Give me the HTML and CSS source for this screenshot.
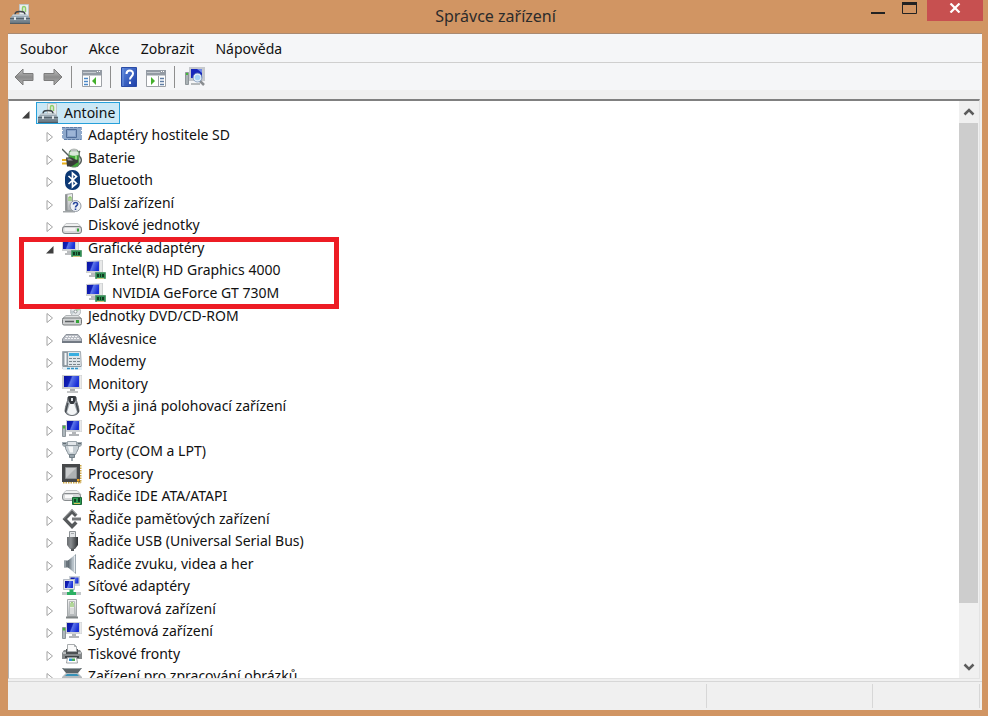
FILE: index.html
```
<!DOCTYPE html>
<html lang="cs">
<head>
  <meta charset="UTF-8">
  <title>Správce zařízení</title>
  <link rel="stylesheet" href="styles.css">
</head>
<body>

  <!-- icon set -->
  <svg class="defs" aria-hidden="true">
    <defs>
      <linearGradient id="gScreen" x1="0" y1="0" x2="1" y2=".3">
        <stop offset="0" stop-color="#0a12a0"/><stop offset=".45" stop-color="#1020b8"/><stop offset=".55" stop-color="#5a74e8"/><stop offset="1" stop-color="#1a30d8"/>
      </linearGradient>
      <linearGradient id="gMetal" x1="0" y1="0" x2="0" y2="1">
        <stop offset="0" stop-color="#f4f4f4"/><stop offset="1" stop-color="#b0b4b6"/>
      </linearGradient>
      <linearGradient id="gSide" x1="0" y1="0" x2="1" y2="0">
        <stop offset="0" stop-color="#6c747b"/><stop offset=".5" stop-color="#e9edf0"/><stop offset="1" stop-color="#59616a"/>
      </linearGradient>
      <linearGradient id="gDark" x1="0" y1="0" x2="1" y2="0">
        <stop offset="0" stop-color="#6a6d70"/><stop offset=".35" stop-color="#8a8e91"/><stop offset="1" stop-color="#2e3133"/>
      </linearGradient>
      <linearGradient id="gCone" x1="0" y1="0" x2="1" y2="0">
        <stop offset="0" stop-color="#59646c"/><stop offset=".6" stop-color="#b8c3cb"/><stop offset="1" stop-color="#7d8b95"/>
      </linearGradient>
      <linearGradient id="gCase" x1="0" y1="0" x2="0" y2="1">
        <stop offset="0" stop-color="#a9b8c2"/><stop offset="1" stop-color="#5f6d77"/>
      </linearGradient>
      <linearGradient id="gArrow" x1="0" y1="0" x2="0" y2="1">
        <stop offset="0" stop-color="#c4c4c4"/><stop offset=".5" stop-color="#8c8c8c"/><stop offset="1" stop-color="#b0b0b0"/>
      </linearGradient>
      <linearGradient id="gHelp" x1="0" y1="0" x2="1" y2="1">
        <stop offset="0" stop-color="#5b86dc"/><stop offset="1" stop-color="#1d3fa8"/>
      </linearGradient>
    </defs>

    <symbol id="i-root" viewBox="0 0 20 20">
      <path d="M9.500.5h9v12h-9z" fill="#e9eded" stroke="#c0c6c7"/>
      <path d="M12.500 8V4a1.500 1.500 0 0 1 3 0v4" fill="none" stroke="#8fcf6a" stroke-width="1.500"/>
      <path d="M5 11c0-3.500 2-3.500 5-3.500s5 0 5 3.500" fill="none" stroke="#3f464b" stroke-width="1.600"/>
      <path d="M3 10.500h14l3 3.500v6H0v-6z" fill="url(#gCase)"/>
      <path d="M3 10.500h14l1 1.500H2z" fill="#c1ccd3"/>
      <path d="M0 14.500h20" stroke="#54626c"/><path d="M0 19.500h20" stroke="#4f5c65"/>
      <path d="M4 13h2v3H4zM14 13h2v3h-2z" fill="#dde3e6"/>
    </symbol>
    <symbol id="i-sd" viewBox="0 0 20 20">
      <path d="M0 2h20v3h-1v1h1v3h-1v1h1v5H3l-3-2v-3h1V9H0V6h1V5H0z" fill="#8fa9cb"/>
      <path d="M0 2.500h20M2 14.500h17" stroke="#5f7da8" stroke-dasharray="3 1"/>
      <path d="M4.500 4.500h10v8h-10z" fill="#86a1c8" stroke="#4f6c98"/>
      <path d="M6 6h7v5H6z" fill="#9db5d6"/>
    </symbol>
    <symbol id="i-battery" viewBox="0 0 20 20">
      <path d="M0 1l8 8" stroke="#55605c" stroke-width="1.500"/>
      <path d="M15 17c5-1 5-6 3-8s-1-5 0-6" fill="none" stroke="#565f5c" stroke-width="1.500"/>
      <rect x="7" y="2" width="10" height="17" rx="3.500" fill="#3fa637" stroke="#66806a"/>
      <path d="M7.500 7V5c0-3 9-3 9 0v2c-2 1-7 1-9 0z" fill="#dbe8da"/>
      <ellipse cx="12" cy="2" rx="3.500" ry="1.500" fill="#b7bdba"/>
      <path d="M13 8h2v7h-2z" fill="#8ed77c"/>
      <path d="M0 12h5M0 15.500h5" stroke="#e9b01c" stroke-width="2"/>
      <path d="M4 9.500h4c4 0 4 3 8 2v3c-3 1-5 4-8 4H5z" fill="#3a3b3a"/>
      <path d="M5 10.500h3l3 2H6z" fill="#979a98"/>
    </symbol>
    <symbol id="i-bluetooth" viewBox="0 0 20 20">
      <rect x="3" y="0" width="15" height="20" rx="7" fill="#0c3874"/>
      <path d="M6.500 6l8 7.500-4 3.500V3l4 3.500-8 7.500" fill="none" stroke="#fff" stroke-width="1.700"/>
    </symbol>
    <symbol id="i-other" viewBox="0 0 20 20">
      <path d="M3.500 1.500l7-1v17h-7z" fill="url(#gMetal)" stroke="#9ba0a1"/>
      <path d="M3.500 1.500v16h2v-16z" fill="#8e9294"/><path d="M1 18h12v1.500H1z" fill="#a0a5a7"/>
      <path d="M7 8V4h2v4" fill="none" stroke="#79bf4c"/>
      <circle cx="13.500" cy="13" r="5.500" fill="#eef1f6" stroke="#939aa3"/>
      <path d="M11.500 11.500c0-3 4.500-2.500 4 0-.3 1.200-2 1.200-2 3M13.500 15.500v1.500" fill="none" stroke="#26459c" stroke-width="1.600"/>
    </symbol>
    <symbol id="i-disk" viewBox="0 0 20 20">
      <path d="M4 8.500h12l3.500 4H.5z" fill="#eff0f0" stroke="#c3c5c7"/>
      <rect x=".5" y="11.500" width="19" height="7" rx="2.500" fill="#d6d8d9" stroke="#7e8284"/>
      <path d="M2.500 13h11v3h-11z" fill="#f4f4f4"/>
      <path d="M15 13.500h2v3h-2z" fill="#35a438"/>
    </symbol>
    <symbol id="i-display" viewBox="0 0 20 20">
      <path d="M0 1l17-1v13H0z" fill="#cfd1d2"/>
      <path d="M14 1l2-.5V13h-2z" fill="#e8e9e9"/>
      <path d="M1 2l12-.5V11H1z" fill="url(#gScreen)"/>
      <path d="M5 13h5v2H5zM3 15h7v2H3z" fill="#b9bcbe"/>
      <path d="M9.500 12.500h10v6h-10z" fill="#2e8f54" stroke="#5d9e74"/>
      <path d="M11 14h2v3h-2zM14 14h1v3h-1zM16 14h2v3h-2z" fill="#123b21"/>
      <path d="M11 18.500h7" stroke="#d3c67e"/>
    </symbol>
    <symbol id="i-dvd" viewBox="0 0 20 20">
      <circle cx="13.500" cy="5.500" r="5" fill="#e3e7e9" stroke="#b3b8bb"/>
      <path d="M13.500 5.500l1.500-5a5 5 0 0 1 3.500 3z" fill="#a5d7a1"/>
      <path d="M13.500 5.500l-4 3-1-4z" fill="#c2cbd0"/>
      <circle cx="13.500" cy="5.500" r="1.500" fill="#fff" stroke="#8f9699"/>
      <path d="M4 9.500h12l3.500 3H.5z" fill="#dfe1e2" stroke="#b0b4b6"/>
      <rect x=".5" y="12" width="19" height="7" rx="1.500" fill="#cfd1d2" stroke="#74787a"/>
      <path d="M3 15.500h9" stroke="#5d6163" stroke-width="1.500"/>
      <path d="M14 14h3v3h-3z" fill="#35a438"/>
    </symbol>
    <symbol id="i-keyboard" viewBox="0 0 20 20">
      <path d="M4 5.500h12l3.500 4.500v3.500H.5V10z" fill="#b9bdc4" stroke="#8d939b"/>
      <path d="M4 7.500h12M3 9.500h14" stroke="#f4f5f7" stroke-dasharray="2 1"/>
      <path d="M0 12h20v2H0z" fill="#737a84"/>
    </symbol>
    <symbol id="i-modem" viewBox="0 0 20 20">
      <path d="M.5.500h18l1 17H.5z" fill="#dfe5e9" stroke="#a2abb1"/>
      <path d="M1 1h5v14H1z" fill="#8f9aa2"/><path d="M3.500 2v12" stroke="#f3f6f8" stroke-width="2"/>
      <path d="M7 2h10v3H7z" fill="#38aee0"/>
      <path d="M7 7.500h11M7 10.500h11M7 13.500h11" stroke="#7b868d" stroke-dasharray="3 1"/>
      <path d="M0 15.500h20V19H1z" fill="#e3eef4"/><path d="M1 15.500h18" stroke="#8c979e"/><path d="M5 17.500h11" stroke="#2f94c8" stroke-width="1.500" stroke-dasharray="3 1"/>
    </symbol>
    <symbol id="i-monitor" viewBox="0 0 20 20">
      <path d="M0 1h20v14H0z" fill="#cccecf"/><path d="M18 1.500h1.500v13H18z" fill="#ececec"/>
      <path d="M2 2h15v11H2z" fill="url(#gScreen)"/>
      <path d="M8 15h5v2H8z" fill="#a9adae"/><path d="M5 17h11v2H5z" fill="#c3c5c6"/>
    </symbol>
    <symbol id="i-mouse" viewBox="0 0 20 20">
      <path d="M6 1c2-1.500 6-1.500 8 0 0 5 3 9 3 14-.5 6-13.500 6-14 0C3 10 6 6 6 1z" fill="url(#gSide)" stroke="#686d72"/>
      <path d="M6 1c2-1.500 6-1.500 8 0l-.5 4-2 3h-3l-2-3z" fill="#34383d"/><path d="M9 2h2v3H9z" fill="#dfe3e7"/>
      <path d="M8 8h4l3 8c-3 3.500-7 3.500-10 0z" fill="#f3f5f6"/>
      <path d="M6 7l-2.500 9M14 7l2.500 9" stroke="#43484d" stroke-width="1.300"/>
    </symbol>
    <symbol id="i-computer" viewBox="0 0 20 20">
      <path d="M4 1h16v12H4z" fill="#cfd2d5"/><path d="M18 1.500h1.500v11H18z" fill="#e9eaeb"/>
      <path d="M5 2h12v9H5z" fill="url(#gScreen)"/>
      <path d="M10 13h4v2h-4zM7 15h10v2H7z" fill="#b2b5b8"/>
      <path d="M.5 6.500h3v11h-3z" fill="#aeb7bc" stroke="#8d959a"/><path d="M1 7h2v2.500H1z" fill="#45b83b"/>
    </symbol>
    <symbol id="i-port" viewBox="0 0 20 20">
      <path d="M0 1h5v5H2L0 4zM15 1h5v3l-2 2h-3z" fill="#a2acb2"/>
      <path d="M1 2.500h3M16 2.500h3" stroke="#626d74"/>
      <path d="M5.500.5h9v4h-9z" fill="#e2e6e9" stroke="#9aa4aa"/>
      <path d="M3.500 4.500h13v3l-2 4-1 2h-7l-1-2-2-4z" fill="#c8d0d5" stroke="#8a949b"/>
      <path d="M6 5.500h5v6H8z" fill="#f6f8f9"/>
      <path d="M7.500 13.500h5v3h-5z" fill="#97a3ab" stroke="#737f87"/><path d="M9 17h2v3H9z" fill="#a5afb6"/>
    </symbol>
    <symbol id="i-cpu" viewBox="0 0 20 20">
      <path d="M18.500 1v18M1 18.500h18" stroke="#cba545" stroke-width="2" stroke-dasharray="1.500 1"/>
      <path d="M0 0h18v18H0z" fill="#46484a"/>
      <path d="M3.500 3.500h11v11h-11z" fill="#aeb1b3" stroke="#8c9092"/><path d="M4 4h10L4 14z" fill="#c9cbcc"/>
      <path d="M15 15h2.500v2.500H15z" fill="#f0a41c"/>
    </symbol>
    <symbol id="i-ide" viewBox="0 0 20 20">
      <path d="M4 4.500h11l4 4H.5z" fill="#eff0f0" stroke="#c3c5c7"/>
      <rect x=".5" y="7.500" width="18" height="7" rx="2.500" fill="#d6d8d9" stroke="#888c8e"/><path d="M3 9h8v3H3z" fill="#fafafa"/>
      <path d="M10.500 11.500h9v7h-9z" fill="#2d9a52" stroke="#1d6637"/>
      <path d="M12 13h2v3h-2zM16 12v4h2v-4z" fill="#124125"/><path d="M12 17.500h6" stroke="#d8c45c"/>
    </symbol>
    <symbol id="i-storage" viewBox="0 0 20 20">
      <path d="M10 0l5.500 5.500-2.500 2.500-3-3-5 5 5 5 3-3 2.500 2.500L10 20 .5 10z" fill="#56595b"/>
      <path d="M10 1l4.500 4.500M1.500 10L10 1" fill="none" stroke="#909395"/>
      <path d="M10 8.500h9v3h-9z" fill="#77797b"/>
    </symbol>
    <symbol id="i-usb" viewBox="0 0 20 20">
      <path d="M7.500.5h6v6h-6z" fill="#e3e6e8" stroke="#8d9295"/><path d="M9 2.500h3" stroke="#a7abad"/>
      <path d="M5 6h11v8l-3 4H8l-3-4z" fill="url(#gDark)"/><path d="M9 17.500h3V20H9z" fill="#54585b"/>
    </symbol>
    <symbol id="i-sound" viewBox="0 0 20 20">
      <path d="M2 6.500h5v7H2z" fill="#69747c"/><path d="M3 7v6" stroke="#c3ccd1"/>
      <path d="M6 6.500l8-6.500v20L6 13.500z" fill="url(#gCone)"/><path d="M12.500 1.500v17" stroke="#e4eaee" stroke-width="1.500"/>
    </symbol>
    <symbol id="i-network" viewBox="0 0 20 20">
      <path d="M7 0h11v10H7z" fill="#cdd2d8"/><path d="M8.500 1.500h8v6h-8z" fill="url(#gScreen)"/>
      <path d="M1 3h12v11H1z" fill="#dfe2e7"/><path d="M1.500 3.500h11v10h-11z" fill="none" stroke="#b6bcc5"/><path d="M3 5h8v7H3z" fill="url(#gScreen)"/>
      <path d="M0 16h19v3H0z" fill="#c3c8ca"/><path d="M7.500 13.500h4V16H14v3H5v-3h2.500z" fill="#2bb062"/>
    </symbol>
    <symbol id="i-software" viewBox="0 0 20 20">
      <path d="M5.500.500h9v17h-9z" fill="url(#gMetal)" stroke="#a5a9ab"/><path d="M7.500 2.500h5v13h-5z" fill="#ecedec" stroke="#b7bbbc"/>
      <path d="M9 8V4.500a1 1 0 0 1 2 0V8" fill="none" stroke="#79c048"/><path d="M9 9v6M11 9v6" stroke="#c6c9ca"/><path d="M4 17.500h12v2H4z" fill="#7f8485"/>
    </symbol>
    <symbol id="i-printer" viewBox="0 0 20 20">
      <path d="M2 6h16l2 3v6H0V9z" fill="#85898b"/><path d="M1 8h18v2H1z" fill="#b9bdbf"/><path d="M4 5h12v5H4z" fill="#4c5053"/>
      <path d="M5.500.5h7l2 2v5h-9z" fill="#fafafa" stroke="#a8acae"/><path d="M12.500.5v2h2" fill="none" stroke="#a8acae"/>
      <path d="M3 12h14v2H3z" fill="#3f4346"/>
      <path d="M5.500 13.500h9l1 5.500h-11z" fill="#fff" stroke="#9da1a3"/><path d="M7 14.500h3V17H7z" fill="#2e8fd0"/><path d="M10 14.500h3V17h-3z" fill="#4aab57"/>
    </symbol>
    <symbol id="i-scanner" viewBox="0 0 20 20">
      <path d="M0 2h20l-4 5H4z" fill="#5c6467"/><path d="M1 2h18l-1 1H2z" fill="#9ca4a7"/>
      <path d="M4 7h12l4 4v5H0v-5z" fill="#b5babd"/><path d="M5 8h10l2 2H3z" fill="#3692b8"/><path d="M0 12h20v2H0z" fill="#777d80"/>
    </symbol>

    <symbol id="t-back" viewBox="0 0 20 18">
      <path d="M1 9l8-8v4.500h10v7H9V17z" fill="url(#gArrow)" stroke="#7c7c7c"/>
    </symbol>
    <symbol id="t-forward" viewBox="0 0 20 18">
      <path d="M19 9l-8-8v4.500H1v7h10V17z" fill="url(#gArrow)" stroke="#7c7c7c"/>
    </symbol>
    <symbol id="t-tree" viewBox="0 0 20 18">
      <path d="M.5 1.500h19v16H.5z" fill="#fff" stroke="#9da1a6"/><path d="M0 1h20v5H0z" fill="#949ba4"/><path d="M1 3.500h13" stroke="#c4c9cf"/><path d="M15 2.500h4" stroke="#fff" stroke-dasharray="1 1"/>
      <path d="M1 6.500h18" stroke="#c9cdd1"/><path d="M7.500 7v10" stroke="#9ba0a6"/><path d="M2 9.500h4M2 12.500h4M2 15.500h4" stroke="#4b88c8" stroke-width="1.300"/>
      <path d="M14 8v8l-4-4z" fill="#44b02c"/>
    </symbol>
    <symbol id="t-pane" viewBox="0 0 20 18">
      <path d="M.5 1.500h19v16H.5z" fill="#fff" stroke="#9da1a6"/><path d="M0 1h20v5H0z" fill="#949ba4"/><path d="M1 3.500h13" stroke="#c4c9cf"/><path d="M15 2.500h4" stroke="#fff" stroke-dasharray="1 1"/>
      <path d="M1 6.500h18" stroke="#c9cdd1"/><path d="M12.500 7v10" stroke="#9ba0a6"/><path d="M14 9.500h4M14 12.500h4M14 15.500h4" stroke="#5f7da4" stroke-width="1.300"/>
      <path d="M5 8v8l4-4z" fill="#44b02c"/>
    </symbol>
    <symbol id="t-help" viewBox="0 0 16 20">
      <path d="M.5.5h15v19H.5z" fill="url(#gHelp)" stroke="#2a4ba6"/><path d="M2 1v18" stroke="#6f94dd"/>
      <path d="M5.500 7c0-4.500 6.500-4.500 6.500-.5 0 3-3 3-3 6" fill="none" stroke="#fff" stroke-width="2"/><path d="M8 14.500h2V17H8z" fill="#fff"/>
    </symbol>
    <symbol id="t-scan" viewBox="0 0 20 20">
      <path d="M4 0h16v14H4z" fill="#c6c9cd"/><path d="M6 2h11v9H6z" fill="#1626bb"/><path d="M12 2h5v4z" fill="#6d86e8"/>
      <path d="M6 16h9v2H6z" fill="#b6babc"/><path d="M.5 5.500h3v12h-3z" fill="#aab2b6" stroke="#8f969a"/><path d="M1 6h2v2H1z" fill="#45b83b"/>
      <path d="M15 14l4 4" stroke="#8a8e91" stroke-width="2.500"/><circle cx="12.500" cy="10.500" r="3.500" fill="#a5d2f5" stroke="#e3eef7" stroke-width="1.500"/><circle cx="12.500" cy="10.500" r="4.500" fill="none" stroke="#6c8bb4" stroke-width=".7"/>
    </symbol>

    <symbol id="a-closed" viewBox="0 0 8 12"><path d="M1 1.500v9L6.500 6z" fill="#fff" stroke="#a3a3a3"/></symbol>
    <symbol id="a-open" viewBox="0 0 8 12"><path d="M7.500 2v7.500H0z" fill="#3f3f3f"/></symbol>
  </svg>

  <div class="window">
    <header class="titlebar">
      <svg class="app-icon"><use href="#i-root"/></svg>
      <h1 class="title">Správce zařízení</h1>
      <div class="controls">
        <button class="ctl" aria-label="Minimalizovat"><svg width="16" height="14"><path d="M1 12h14v2H1z" fill="#222"/></svg></button>
        <button class="ctl" aria-label="Maximalizovat"><svg width="16" height="14"><path d="M.5 2.500h14v11H.5z" fill="none" stroke="#222"/><path d="M0 2h15v3H0z" fill="#222"/></svg></button>
        <button class="ctl close" aria-label="Zavřít"><svg width="12" height="10"><path d="M1.500.5l9 9M10.500.5l-9 9" stroke="#fff" stroke-width="2.200"/></svg></button>
      </div>
    </header>

    <div class="client">
      <nav class="menubar">
        <button>Soubor</button>
        <button>Akce</button>
        <button>Zobrazit</button>
        <button>Nápověda</button>
      </nav>

      <div class="toolbar">
        <div class="group">
          <button aria-label="Zpět"><svg width="20" height="18"><use href="#t-back"/></svg></button>
          <button aria-label="Vpřed"><svg width="20" height="18"><use href="#t-forward"/></svg></button>
        </div>
        <div class="group">
          <button class="low" aria-label="Strom konzoly"><svg width="20" height="18"><use href="#t-tree"/></svg></button>
        </div>
        <div class="group">
          <button aria-label="Nápověda"><svg width="16" height="20"><use href="#t-help"/></svg></button>
          <button class="low" aria-label="Podokno akcí"><svg width="20" height="18"><use href="#t-pane"/></svg></button>
        </div>
        <div class="group">
          <button aria-label="Vyhledat změny hardwaru"><svg width="20" height="20"><use href="#t-scan"/></svg></button>
        </div>
      </div>

      <main class="view">
        <ul class="tree">
          <li class="root"><button class="exp" aria-label="Sbalit"><svg><use href="#a-open"/></svg></button><span class="node selected"><svg><use href="#i-root"/></svg>Antoine</span></li>
          <li><button class="exp" aria-label="Rozbalit"><svg><use href="#a-closed"/></svg></button><span class="node"><svg><use href="#i-sd"/></svg>Adaptéry hostitele SD</span></li>
          <li><button class="exp" aria-label="Rozbalit"><svg><use href="#a-closed"/></svg></button><span class="node"><svg><use href="#i-battery"/></svg>Baterie</span></li>
          <li><button class="exp" aria-label="Rozbalit"><svg><use href="#a-closed"/></svg></button><span class="node"><svg><use href="#i-bluetooth"/></svg>Bluetooth</span></li>
          <li><button class="exp" aria-label="Rozbalit"><svg><use href="#a-closed"/></svg></button><span class="node"><svg><use href="#i-other"/></svg>Další zařízení</span></li>
          <li><button class="exp" aria-label="Rozbalit"><svg><use href="#a-closed"/></svg></button><span class="node"><svg><use href="#i-disk"/></svg>Diskové jednotky</span></li>
          <li><button class="exp" aria-label="Sbalit"><svg><use href="#a-open"/></svg></button><span class="node"><svg><use href="#i-display"/></svg>Grafické adaptéry</span></li>
          <li class="leaf"><span class="node"><svg><use href="#i-display"/></svg>Intel(R) HD Graphics 4000</span></li>
          <li class="leaf"><span class="node"><svg><use href="#i-display"/></svg>NVIDIA GeForce GT 730M</span></li>
          <li><button class="exp" aria-label="Rozbalit"><svg><use href="#a-closed"/></svg></button><span class="node"><svg><use href="#i-dvd"/></svg>Jednotky DVD/CD-ROM</span></li>
          <li><button class="exp" aria-label="Rozbalit"><svg><use href="#a-closed"/></svg></button><span class="node"><svg><use href="#i-keyboard"/></svg>Klávesnice</span></li>
          <li><button class="exp" aria-label="Rozbalit"><svg><use href="#a-closed"/></svg></button><span class="node"><svg><use href="#i-modem"/></svg>Modemy</span></li>
          <li><button class="exp" aria-label="Rozbalit"><svg><use href="#a-closed"/></svg></button><span class="node"><svg><use href="#i-monitor"/></svg>Monitory</span></li>
          <li><button class="exp" aria-label="Rozbalit"><svg><use href="#a-closed"/></svg></button><span class="node"><svg><use href="#i-mouse"/></svg>Myši a jiná polohovací zařízení</span></li>
          <li><button class="exp" aria-label="Rozbalit"><svg><use href="#a-closed"/></svg></button><span class="node"><svg><use href="#i-computer"/></svg>Počítač</span></li>
          <li><button class="exp" aria-label="Rozbalit"><svg><use href="#a-closed"/></svg></button><span class="node"><svg><use href="#i-port"/></svg>Porty (COM a LPT)</span></li>
          <li><button class="exp" aria-label="Rozbalit"><svg><use href="#a-closed"/></svg></button><span class="node"><svg><use href="#i-cpu"/></svg>Procesory</span></li>
          <li><button class="exp" aria-label="Rozbalit"><svg><use href="#a-closed"/></svg></button><span class="node"><svg><use href="#i-ide"/></svg>Řadiče IDE ATA/ATAPI</span></li>
          <li><button class="exp" aria-label="Rozbalit"><svg><use href="#a-closed"/></svg></button><span class="node"><svg><use href="#i-storage"/></svg>Řadiče paměťových zařízení</span></li>
          <li><button class="exp" aria-label="Rozbalit"><svg><use href="#a-closed"/></svg></button><span class="node"><svg><use href="#i-usb"/></svg>Řadiče USB (Universal Serial Bus)</span></li>
          <li><button class="exp" aria-label="Rozbalit"><svg><use href="#a-closed"/></svg></button><span class="node"><svg><use href="#i-sound"/></svg>Řadiče zvuku, videa a her</span></li>
          <li><button class="exp" aria-label="Rozbalit"><svg><use href="#a-closed"/></svg></button><span class="node"><svg><use href="#i-network"/></svg>Síťové adaptéry</span></li>
          <li><button class="exp" aria-label="Rozbalit"><svg><use href="#a-closed"/></svg></button><span class="node"><svg><use href="#i-software"/></svg>Softwarová zařízení</span></li>
          <li><button class="exp" aria-label="Rozbalit"><svg><use href="#a-closed"/></svg></button><span class="node"><svg><use href="#i-computer"/></svg>Systémová zařízení</span></li>
          <li><button class="exp" aria-label="Rozbalit"><svg><use href="#a-closed"/></svg></button><span class="node"><svg><use href="#i-printer"/></svg>Tiskové fronty</span></li>
          <li><button class="exp" aria-label="Rozbalit"><svg><use href="#a-closed"/></svg></button><span class="node"><svg><use href="#i-scanner"/></svg>Zařízení pro zpracování obrázků</span></li>
        </ul>
        <div class="highlight"></div>

        <div class="scrollbar">
          <button aria-label="Nahoru"><svg width="12" height="8"><path d="M1.500 6.500L6 2l4.500 4.500" fill="none" stroke="#5c5c5c" stroke-width="2.500"/></svg></button>
          <div class="track"><div class="thumb"></div></div>
          <button aria-label="Dolů"><svg width="12" height="8"><path d="M1.500 1.500L6 6l4.500-4.500" fill="none" stroke="#5c5c5c" stroke-width="2.500"/></svg></button>
        </div>
      </main>

      <footer class="statusbar">
        <span></span>
        <span></span>
        <span></span>
      </footer>
    </div>
  </div>

</body>
</html>
```
FILE: styles.css
```
* { box-sizing: border-box; }
body { margin: 0; font-family: "Noto Sans", "Open Sans", sans-serif; font-size: 14px; color: #111; }
button { margin: 0; padding: 0; border: 0; background: none; font: inherit; color: inherit; }
svg { display: block; }
.defs { position: absolute; width: 0; height: 0; }

.window { display: flex; flex-direction: column; height: 100vh; padding: 0 5px 6px 8px; background: #d19563; }

/* title bar */
.titlebar { display: grid; grid-template-columns: 1fr auto 1fr; height: 33px; }
.app-icon { width: 20px; height: 20px; margin: 4px 2px; }
.title { margin: 0; font-size: 16px; font-weight: normal; line-height: 32px; color: #2b2b2b; }
.controls { display: flex; justify-content: flex-end; align-items: flex-start; }
.ctl { display: flex; justify-content: center; width: 32px; }
.close { align-items: center; width: 56px; height: 21px; margin-left: 1px; padding-bottom: 6px; background: #c75050; }

.client { display: flex; flex: 1; flex-direction: column; min-height: 0; margin-right: 1px; border-top: 1px solid #a98a72; background: #f0f0f0; }

/* menu */
.menubar { display: flex; gap: 21px; height: 29px; padding: 0 12px; border-bottom: 1px solid #cfcfcf; background: #f5f6f8; }

/* toolbar */
.toolbar { display: flex; align-items: center; height: 27px; padding-left: 6px; background: #f5f6f8; }
.group { display: flex; align-items: center; gap: 9px; height: 22px; padding-right: 8px; }
.group + .group { padding-left: 10px; border-left: 1px solid #8e8e8e; }
.low { padding-top: 3px; }

/* device tree */
.view { position: relative; display: flex; flex: 1; min-height: 0; margin: 9px 2px 0 0; border: 1px solid #b4b4b4; border-top: 2px solid #808080; border-right-color: #e3e3e3; border-bottom-color: #e3e3e3; background: #fff; }
.tree { flex: 1; margin: 0; padding: 0; overflow: hidden; list-style: none; }
.tree li { display: flex; align-items: center; height: 22px; padding-left: 37px; }
.tree li:nth-child(odd), .tree li:nth-child(10) { height: 23px; }
.tree .root { padding-left: 13px; }
.tree .leaf { padding-left: 75px; }
.exp { width: 8px; height: 16px; padding-top: 4px; margin-right: 6px; }
.exp svg { width: 8px; height: 12px; }
.node { display: flex; align-items: center; height: 22px; padding: 0 4px 0 2px; white-space: nowrap; line-height: 22px; }
.node svg { width: 20px; height: 20px; margin-right: 6px; }
.selected { padding-left: 1px; border: 1px solid #26a0da; background: #cbe8f6; }
.highlight { position: absolute; left: 10px; top: 136px; width: 320px; height: 72px; border: 5px solid #ed1c24; }

.scrollbar { display: flex; flex-direction: column; width: 20px; padding-right: 1px; background: #f0f0f0; }
.scrollbar button { display: flex; align-items: center; justify-content: center; height: 22px; }
.track { flex: 1; }
.thumb { height: 90%; background: #cdcdcd; }

/* status bar */
.statusbar { display: grid; grid-template-columns: 1fr 166px 107px; height: 29px; margin-top: 2px; padding: 2px 2px 2px 0; border-top: 1px solid #d7d7d7; }
.statusbar span { border-right: 1px solid #d7d7d7; }
```
